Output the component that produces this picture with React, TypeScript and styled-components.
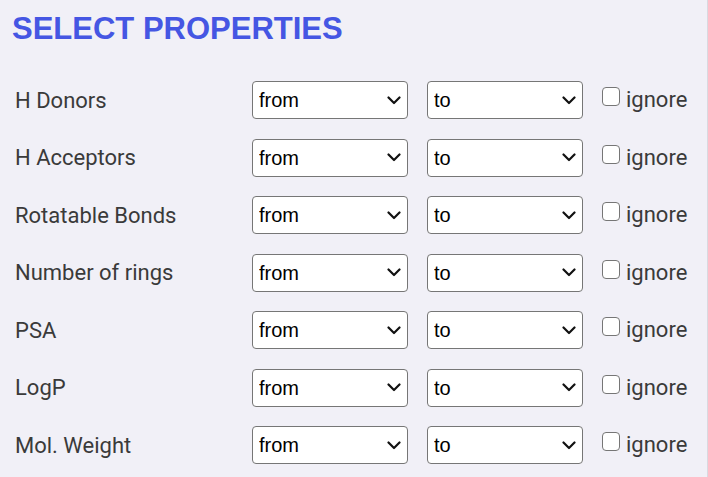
import React from "react";
import styled, { createGlobalStyle } from "styled-components";

const GlobalStyle = createGlobalStyle`
  html, body {
    margin: 0;
    padding: 0;
    background: #f1f0f7;
  }
  body {
    font-family: "Liberation Sans", Arial, sans-serif;
  }
`;

const chevron =
  "data:image/svg+xml;utf8," +
  encodeURIComponent(
    '<svg xmlns="http://www.w3.org/2000/svg" width="14" height="9" viewBox="0 0 14 9"><path d="M1.5 1.5 L7 7 L12.5 1.5" fill="none" stroke="#111" stroke-width="2.2" stroke-linecap="round" stroke-linejoin="round"/></svg>'
  );

const Page = styled.div`
  box-sizing: border-box;
  width: 708px;
  height: 477px;
  padding: 11px 12px 0 12px;
  border-right: 1px solid #d9d9e0;
  overflow: hidden;
`;

const Title = styled.h2`
  margin: 0 0 34px 0;
  font-family: "Liberation Sans", Arial, sans-serif;
  font-size: 31px;
  font-weight: 700;
  color: #4556e3;
  line-height: 36px;
`;

const Form = styled.div`
  display: grid;
  grid-template-columns: 221px 156px 156px auto;
  column-gap: 19px;
  row-gap: 19.5px;
  align-items: center;
`;

const Label = styled.div`
  padding-left: 3px;
  font-family: "Roboto", "Liberation Sans", sans-serif;
  font-size: 22px;
  color: #3a3a3a;
`;

const Select = styled.select`
  appearance: none;
  box-sizing: border-box;
  width: 156px;
  height: 38px;
  font-family: "Liberation Sans", Arial, sans-serif;
  font-size: 20px;
  color: #000;
  background: #fff url("${chevron}") no-repeat right 6px center;
  border: 1px solid #767676;
  border-radius: 4px;
  padding: 0 28px 0 6px;
`;

const Ignore = styled.label`
  display: flex;
  align-items: flex-start;
  gap: 6px;
  font-family: "Roboto", "Liberation Sans", sans-serif;
  font-size: 22px;
  color: #3a3a3a;
  line-height: 26px;
`;

const Check = styled.input`
  appearance: none;
  box-sizing: border-box;
  width: 18px;
  height: 19px;
  margin: 0;
  background: #fff;
  border: 1.5px solid #767676;
  border-radius: 4px;
`;

const properties = [
  "H Donors",
  "H Acceptors",
  "Rotatable Bonds",
  "Number of rings",
  "PSA",
  "LogP",
  "Mol. Weight",
];

export default function App() {
  return (
    <Page>
      <GlobalStyle />
      <Title>SELECT PROPERTIES</Title>
      <Form>
        {properties.map((p) => (
          <React.Fragment key={p}>
            <Label>{p}</Label>
            <Select defaultValue="from">
              <option value="from">from</option>
            </Select>
            <Select defaultValue="to">
              <option value="to">to</option>
            </Select>
            <Ignore>
              <Check type="checkbox" />
              ignore
            </Ignore>
          </React.Fragment>
        ))}
      </Form>
    </Page>
  );
}
